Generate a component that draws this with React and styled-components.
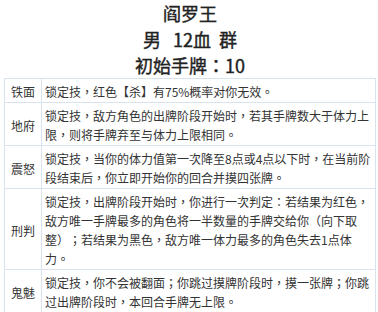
import React from "react";
import styled, { createGlobalStyle } from "styled-components";

const Global = createGlobalStyle`
  html, body { margin: 0; padding: 0; background: #fff; }
  body {
    margin: 0 2px 0 4px;
    font-family: "Noto Sans CJK TC", "Noto Sans CJK SC", "Noto Sans", sans-serif;
    color: #333;
    text-spacing-trim: space-all;
  }
`;

const Header = styled.div`
  text-align: center;
  font-size: 18px;
  font-weight: 400;
  line-height: 26px;
  color: #222;
  -webkit-text-stroke: 0.4px #222;
`;

const Line = styled.div`
  white-space: pre;
`;

const Table = styled.table`
  width: 372px;
  border-collapse: collapse;
  table-layout: fixed;
  font-size: 12px;
  line-height: 19px;
  color: #333;
  text-spacing-trim: space-all;
`;

const Label = styled.td`
  width: 26px;
  border: 1px solid #d9e3ee;
  padding: 3px 5px 1px 5px;
  text-align: center;
  vertical-align: middle;
  white-space: nowrap;
`;

const Desc = styled.td`
  border: 1px solid #d9e3ee;
  padding: 3px 2px 1px 3px;
  vertical-align: top;
  word-break: break-all;
`;

const skills = [
  ["铁面", "锁定技，红色【杀】有75%概率对你无效。"],
  ["地府", "锁定技，敌方角色的出牌阶段开始时，若其手牌数大于体力上限，则将手牌弃至与体力上限相同。"],
  ["震怒", "锁定技，当你的体力值第一次降至8点或4点以下时，在当前阶段结束后，你立即开始你的回合并摸四张牌。"],
  ["刑判", "锁定技，出牌阶段开始时，你进行一次判定：若结果为红色，敌方唯一手牌最多的角色将一半数量的手牌交给你（向下取整）；若结果为黑色，敌方唯一体力最多的角色失去1点体力。"],
  ["鬼魅", "锁定技，你不会被翻面；你跳过摸牌阶段时，摸一张牌；你跳过出牌阶段时，本回合手牌无上限。"],
];

export default function App() {
  return (
    <>
      <Global />
      <Header>
        <Line>阎罗王</Line>
        <Line>{"男   12血  群"}</Line>
        <Line>初始手牌：10</Line>
      </Header>
      <Table>
        <tbody>
          {skills.map(([name, text]) => (
            <tr key={name}>
              <Label>{name}</Label>
              <Desc>{text}</Desc>
            </tr>
          ))}
        </tbody>
      </Table>
    </>
  );
}
